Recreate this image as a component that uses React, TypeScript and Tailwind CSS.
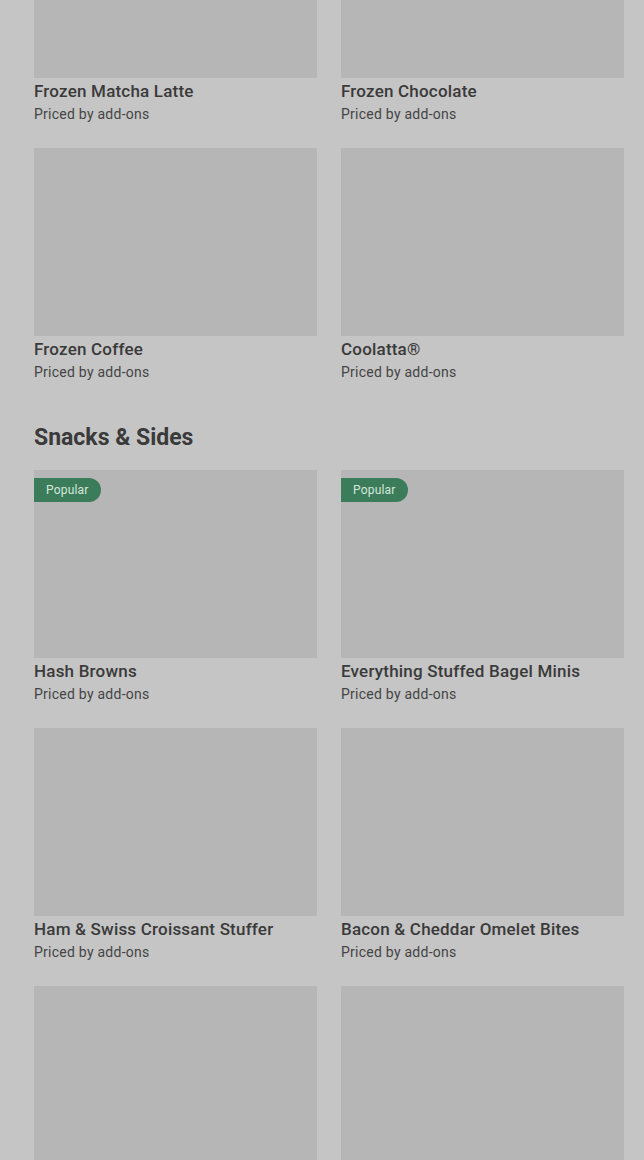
const drinks = [
  { name: 'Frozen Matcha Latte' },
  { name: 'Frozen Chocolate' },
  { name: 'Frozen Coffee' },
  { name: 'Coolatta®' },
]

// last row is scrolled past the bottom edge, only the photos show
const snacks: { name?: string; popular?: boolean }[] = [
  { name: 'Hash Browns', popular: true },
  { name: 'Everything Stuffed Bagel Minis', popular: true },
  { name: 'Ham & Swiss Croissant Stuffer' },
  { name: 'Bacon & Cheddar Omelet Bites' },
  {},
  {},
]

function Card({ name, popular }: { name?: string; popular?: boolean }) {
  return (
    <div className="flex flex-col">
      <div className="relative h-[188px] w-full bg-[#b6b6b6]">
        {popular && (
          <span className="absolute left-0 top-2 flex h-6 items-center rounded-r-full bg-[#3b7d5b] px-3 text-xs tracking-[0.2px] text-[#d6e6dc]">
            Popular
          </span>
        )}
      </div>
      {name && (
        <>
          <p className="text-[17px] font-medium leading-[26px] tracking-[0.2px] text-[#3a3a3a]">{name}</p>
          <p className="text-sm leading-5 tracking-[0.25px] text-[#444]">Priced by add-ons</p>
        </>
      )}
    </div>
  )
}

export default function App() {
  return (
    <div
      className="h-[1160px] overflow-hidden bg-[#c5c5c5] pl-[34px] pr-[20px]"
      style={{ fontFamily: 'Roboto, "Liberation Sans", sans-serif' }}
    >
      <div className="-mt-[110px]">
        <div className="grid grid-cols-2 gap-6">
          {drinks.map((item) => (
            <Card key={item.name} name={item.name} />
          ))}
        </div>

        <h2 className="mt-10 mb-4 text-[23px] font-bold leading-8 text-[#3a3a3a]">
          Snacks &amp; Sides
        </h2>
        <div className="grid grid-cols-2 gap-6">
          {snacks.map((item, i) => (
            <Card key={i} name={item.name} popular={item.popular} />
          ))}
        </div>
      </div>
    </div>
  )
}
